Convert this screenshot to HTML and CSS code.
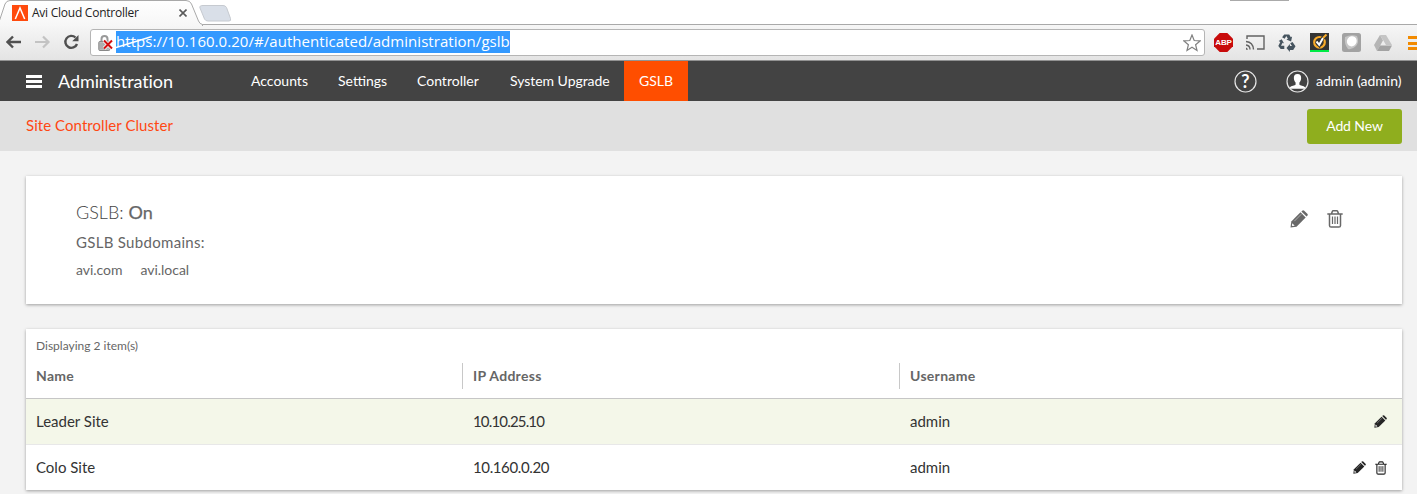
FILE: index.html
```html
<!DOCTYPE html>
<html lang="en">
<head>
<meta charset="utf-8">
<title>Avi Cloud Controller</title>
<link rel="stylesheet" href="styles.css">
</head>
<body>
<svg class="defs" width="0" height="0">
  <symbol id="pencil" viewBox="0 0 18 18"><path d="M.5 17.500l.8-6L10.500 2.300l5.200 5.200L6.500 16.700z"/><path d="M11.400 1.500l.8-.8q1-1 2 0l3.100 3.100q1 1 0 2l-.8.8z"/><path d="M4.300 11.200l7-7" stroke="#fff" stroke-opacity=".55" stroke-width=".8"/><path d="M2.300 13.300l2.400 2.400-2.200.4-.6-.6z" fill="#fff"/></symbol>
  <symbol id="trash" viewBox="0 0 16 18"><g fill="none" stroke="currentColor" stroke-width="1.500"><path d="M.3 4h15.400M2.500 4v11.500q0 1.600 1.600 1.600h7.800q1.600 0 1.600-1.600V4M4.500 3.800L5.400 1.300q.2-.5.700-.5h3.800q.5 0 .7.500l.9 2.500"/><path stroke-width="1.200" d="M5.500 6.500V14M8 6.500V14M10.500 6.500V14"/></g></symbol>
</svg>

<header class="browser">
  <div class="tabs">
    <svg class="tab-shape" width="236" height="26" viewBox="0 0 236 26">
      <defs><linearGradient id="tabfill" x2="0" y2="1"><stop offset="0" stop-color="#fff"/><stop offset="1" stop-color="#f6f6f6"/></linearGradient></defs>
      <path d="M203 5.500h20q2.500 0 3.500 2l4 11q.8 2.500-1.500 2.500h-21q-2.500 0-3.500-2l-4.500-11q-1-2.500 3-2.500z" fill="#d9dfe8" stroke="#c6cad0"/>
      <path d="M-1 22L5 4Q6.500.5 10 .5H186q4 0 5.500 3.500l7 17q1.200 3 4 3.500V27H-1z" fill="url(#tabfill)" stroke="#a9a9a9"/>
    </svg>
    <div class="tab">
      <svg width="16" height="16" viewBox="0 0 16 16"><path fill="#ff4a0d" d="M0 0h16v16H0z"/><path d="M3.300 14L8 3l4.700 11" fill="none" stroke="#fff" stroke-width="1.500"/></svg>
      <span class="tab-title">Avi Cloud Controller</span>
      <svg class="tab-close" width="8" height="8" viewBox="0 0 8 8"><path d="M.5.500l7 7M7.500.500l-7 7" stroke="#5a5a5a" stroke-width="1.600"/></svg>
    </div>
    <i class="window-mark"></i>
  </div>
  <div class="toolbar">
    <svg class="arrows" width="74" height="18" viewBox="0 0 74 18" fill="none">
      <path d="M15 9H2M7 3.500L1.500 9 7 14.500" stroke="#505050" stroke-width="2.400"/>
      <path d="M29 9h13M37 3.500L42.500 9 37 14.500" stroke="#c3c3c3" stroke-width="2.200"/>
      <path d="M69.500 4.500A6 6 0 1 0 71 11" stroke="#505050" stroke-width="2.400"/><path d="M72.500 2v6.200h-6.300z" fill="#505050"/>
    </svg>
    <div class="omnibox">
      <svg class="lock" width="16" height="18" viewBox="0 0 16 18"><path d="M3.500 8V5a3 3 0 0 1 6 0v3" fill="none" stroke="#999" stroke-width="2"/><rect x=".8" y="7.500" width="11" height="9" rx="1" fill="#bbb" stroke="#888"/><path d="M1.500 10h9M1.500 12h9M1.500 14h9" stroke="#999" stroke-width=".7"/><path d="M6 6.500l8 8M14 6.500l-8 8" stroke="#fff" stroke-width="3.600"/><path d="M6 6.500l8 8M14 6.500l-8 8" stroke="#d20f0f" stroke-width="2"/></svg>
      <div class="url"><span class="scheme">https<svg class="strike" width="38" height="14" viewBox="0 0 38 14"><path d="M0 12.500L36 1.500" stroke="#fff" stroke-width="1.600"/></svg></span>://10.160.0.20/#/authenticated/administration/gslb</div>
      <svg class="star" width="18" height="18" viewBox="0 0 18 18"><path d="M9 1l2.200 5.500 5.900.4-4.500 3.800 1.400 5.800L9 13.300l-5 3.200 1.400-5.800L.9 6.900l5.900-.4z" fill="#fff" stroke="#808080" stroke-width="1.200"/></svg>
    </div>
    <div class="extensions">
      <div class="abp">ABP</div>
      <svg width="19" height="15" viewBox="0 0 19 15" fill="none" stroke="#626262" stroke-width="1.400"><path d="M1 4V1h17v13h-7M0 6.500q7 .5 7.500 8M0 10q4 .5 4 4.500"/><path d="M0 12.500q1.500.2 2 2.200H0z" fill="#626262" stroke="none"/></svg>
      <svg width="18" height="18" viewBox="0 0 18 18" fill="#46545f"><path d="M6.200.5h5l1.600 2.700 1.300-.8-1 5-4.700-1.800 1.500-.8L8.300 2 6.700 4.700 4.100 3.200zM3.700 5.200l2.400 4.300-1.500-.7-1.600 3h3.300v3.300H2.700L.3 12l2-4-1.600-.9zM14.500 8.100l3 4.200-2.300 3.800h-3.300V18L8.500 13.900l3.400-3.800v1.800H14l-1.800-2.600z"/></svg>
      <svg width="19" height="19" viewBox="0 0 19 19"><path fill="#343434" d="M0 0h19v17H0z"/><path fill="#00ea45" d="M0 17h19v2H0z"/><circle cx="9.500" cy="9.300" r="5.300" fill="none" stroke="#faac2a" stroke-width="2.200"/><path d="M6.500 8.500l2.700 3.300Q11 6 16.500 1.500" fill="none" stroke="#343434" stroke-width="3.600"/><path d="M6.500 8.500l2.700 3.300L13 5" fill="none" stroke="#fff" stroke-width="2"/><path d="M13 5l3.500-3.500" stroke="#faac2a" stroke-width="2"/></svg>
      <svg width="19" height="19" viewBox="0 0 19 19"><rect width="19" height="19" rx="2.500" fill="#a2a2a2"/><path d="M3 4q6-3 12-1 2.500 6-1 10-4 4-8 3-4-5-3-12z" fill="#c6c6c6"/><ellipse cx="9.800" cy="8.300" rx="4.800" ry="5.200" transform="rotate(35 9.800 8.300)" fill="#fff"/></svg>
      <svg width="18" height="16" viewBox="0 0 18 16"><path d="M6 0h6l6 10h-6z" fill="#c5c5c5"/><path d="M6 0L0 10l3 6 6-10.500z" fill="#b5b5b5"/><path d="M6 10.500h12L15 16H3z" fill="#a3a3a3"/></svg>
      <i class="chrome-menu"></i>
    </div>
  </div>
</header>

<nav class="nav">
  <i class="burger"></i>
  <h1 class="nav-title">Administration</h1>
  <div class="links">
    <a class="link l1">Accounts</a><a class="link l2">Settings</a><a class="link l3">Controller</a><a class="link l4">System Upgrade</a><a class="link active">GSLB</a>
  </div>
  <div class="account">
    <svg width="23" height="23" viewBox="0 0 23 23"><circle cx="11.500" cy="11.500" r="10.500" fill="none" stroke="#e5e5e5" stroke-width="1.200"/><text x="11.500" y="17.500" text-anchor="middle" class="help">?</text></svg>
    <svg width="23" height="23" viewBox="0 0 23 23"><circle cx="11.500" cy="11.500" r="10.500" fill="none" stroke="#e5e5e5" stroke-width="1.200"/><path d="M11.500 4c2.800 0 3.900 2 3.600 4.700-.2 2-1 3-1.700 3.900v2c.6 1.200 4.400 1 5.600 2.700v1.500H4v-1.500c1.200-1.700 5-1.500 5.600-2.700v-2c-.7-.9-1.500-1.900-1.700-3.900C7.600 6 8.700 4 11.500 4z" fill="#fff"/></svg>
    <span class="user">admin (admin)</span>
  </div>
</nav>

<div class="subbar">
  <span class="crumb">Site Controller Cluster</span>
  <button class="add">Add New</button>
</div>

<main>
  <section class="card summary">
    <div>
      <div class="status">GSLB: <span class="on">On</span></div>
      <div class="sub-title">GSLB Subdomains:</div>
      <div class="domains"><span>avi.com</span><span>avi.local</span></div>
    </div>
    <div class="summary-actions">
      <svg width="18" height="18" fill="currentColor"><use href="#pencil"/></svg>
      <svg width="16" height="18"><use href="#trash"/></svg>
    </div>
  </section>

  <section class="card list">
    <div class="count">Displaying 2 item(s)</div>
    <div class="row head"><div class="cell"><span>Name</span></div><div class="cell"><span>IP Address</span></div><div class="cell"><span>Username</span></div></div>
    <div class="row hover"><div class="cell"><span>Leader Site</span></div><div class="cell"><span class="ip1">10.10.25.10</span></div><div class="cell"><span>admin</span>
      <div class="actions"><svg width="13" height="13" fill="currentColor"><use href="#pencil"/></svg></div></div></div>
    <div class="row"><div class="cell"><span>Colo Site</span></div><div class="cell"><span class="ip2">10.160.0.20</span></div><div class="cell"><span>admin</span>
      <div class="actions"><svg width="13" height="13" fill="currentColor"><use href="#pencil"/></svg><svg width="12" height="14"><use href="#trash"/></svg></div></div></div>
  </section>
</main>
</body>
</html>
```
FILE: styles.css
```css
* { box-sizing: border-box; }
body { margin: 0; height: 494px; overflow: hidden; background: #f3f3f3; font-family: Lato, sans-serif; color: #333; }
svg { display: block; flex: none; }
.defs { position: absolute; }

.browser { height: 61px; background: #fff; font-family: "Open Sans", sans-serif; }
.tabs { height: 24px; position: relative; display: flex; }
.tab-shape { position: absolute; left: 0; top: 0; z-index: 1; }
.tab { position: relative; z-index: 2; display: flex; align-items: center; padding-left: 12px; height: 26px; }
.tab-title { font-size: 12px; width: 108px; margin-left: 4px; letter-spacing: -.25px; white-space: nowrap; color: #222; padding-bottom: 1px; }
.tab-close { margin-left: 39px; }
.window-mark { width: 59px; height: 1px; background: #aaa; margin-left: auto; margin-right: 128px; }
.toolbar { height: 37px; border-top: 1px solid #a9a9a9; border-bottom: 1px solid #929292; background: linear-gradient(#f6f6f6, #e4e4e4); display: flex; align-items: center; padding-left: 6px; overflow: hidden; }
.arrows { margin-bottom: 1px; }
.omnibox { width: 1115px; height: 27px; margin-left: 10px; border: 1px solid #b5b5b5; border-radius: 3px; background: #fff; display: flex; align-items: center; padding: 0 3px 0 7px; flex: none; }
.url { position: relative; height: 22px; line-height: 20px; margin: 0 0 1px 2px; background: #3399ff; color: #fff; font-size: 15px; white-space: nowrap; width: 394px; letter-spacing: .045px; }
.strike { position: absolute; left: 0; top: 4px; }
.star { margin-left: auto; }
.extensions { display: flex; align-items: center; margin-left: 9px; gap: 13px; flex: none; }
.extensions > :nth-child(n + 4) { position: relative; left: 1px; }
.abp { width: 19px; height: 19px; line-height: 19px; text-align: center; font-family: "Liberation Sans", sans-serif; font-weight: 700; font-size: 8px; letter-spacing: -.2px; color: #fff; background: #c80b0b; clip-path: polygon(30% 0, 70% 0, 100% 30%, 100% 70%, 70% 100%, 30% 100%, 0 70%, 0 30%); }
.chrome-menu { width: 14px; height: 14px; margin-left: 3px; background: repeating-linear-gradient(#f28a00 0 3px, transparent 3px 5.500px); }

.nav { height: 40px; background: #434343; color: #fff; display: flex; align-items: center; padding: 0 15px 0 26px; }
.burger { width: 16px; height: 13px; background: linear-gradient(#fff 3px, transparent 3px 5px, #fff 5px 8px, transparent 8px 10px, #fff 10px); }
.nav-title { font-size: 18px; font-weight: 400; margin: 0 0 0 16px; width: 178px; white-space: nowrap; letter-spacing: -.08px; }
.links { display: flex; }
.link { height: 40px; line-height: 40px; padding-left: 15px; font-size: 14px; white-space: nowrap; }
.l1 { width: 87px; }
.l2 { width: 79px; }
.l3 { width: 93px; }
.l4 { width: 129px; letter-spacing: -.04px; }
.active { width: 64px; background: #ff4e00; }
.account { margin-left: auto; display: flex; align-items: center; }
.account svg + svg { margin-left: 29px; }
.help { font: bold 18px Lato, sans-serif; fill: #fff; }
.user { width: 86px; margin: 0 0 1px 7px; font-size: 14px; white-space: nowrap; }

.subbar { height: 50px; background: #e0e0e0; display: flex; align-items: center; justify-content: space-between; padding: 0 15px 0 26px; }
.crumb { color: #ff4713; font-size: 15px; letter-spacing: .06px; padding-bottom: 2px; }
.add { width: 95px; height: 35px; padding: 0 0 2px; border: 0; border-radius: 3px; background: #8fae1e; color: #fff; font: 14px Lato, sans-serif; letter-spacing: -.1px; }

main { padding: 25px 15px 0 26px; }
.card { background: #fff; box-shadow: 0 1px 3px rgba(0, 0, 0, .35); }
.summary { height: 128px; padding: 24px 59px 0 50px; display: flex; justify-content: space-between; color: #666; }
.status { font-size: 18px; line-height: 24px; font-weight: 300; color: #444; }
.on { font-weight: 400; color: #666; -webkit-text-stroke: .25px; }
.sub-title { font-size: 15px; line-height: 20px; margin-top: 8px; letter-spacing: .3px; }
.domains { display: flex; font-size: 14px; line-height: 18px; margin-top: 9px; gap: 18px; letter-spacing: -.03px; }
.summary-actions { display: flex; gap: 19px; padding-top: 10px; color: #686868; }

.list { height: 161px; margin-top: 25px; }
.count { height: 32px; padding: 9px 10px 0; font-size: 12px; line-height: 15px; color: #666; }
.row { display: grid; grid-template-columns: 437px 437px 1fr; height: 46px; font-size: 15px; align-items: center; }
.row + .row { border-top: 1px solid #e8e8e8; }
.cell { padding-left: 10px; display: flex; align-items: center; white-space: nowrap; }
.cell > span { padding-bottom: 2px; }
.head { height: 37px; align-items: start; color: #666; font-weight: 700; font-size: 14px; letter-spacing: .3px; }
.head .cell { height: 26px; margin-top: 2px; }
.head .cell + .cell { box-shadow: inset 1px 0 #c8c8c8; margin-left: -1px; padding-left: 11px; }
.row.hover { background: #f4f7e9; border-top-color: #c6c6c6; }
.ip1 { letter-spacing: -.83px; }
.ip2 { letter-spacing: -.38px; }
.actions { display: flex; align-items: center; gap: 9px; margin-left: auto; padding-right: 15px; color: #252525; }
```
